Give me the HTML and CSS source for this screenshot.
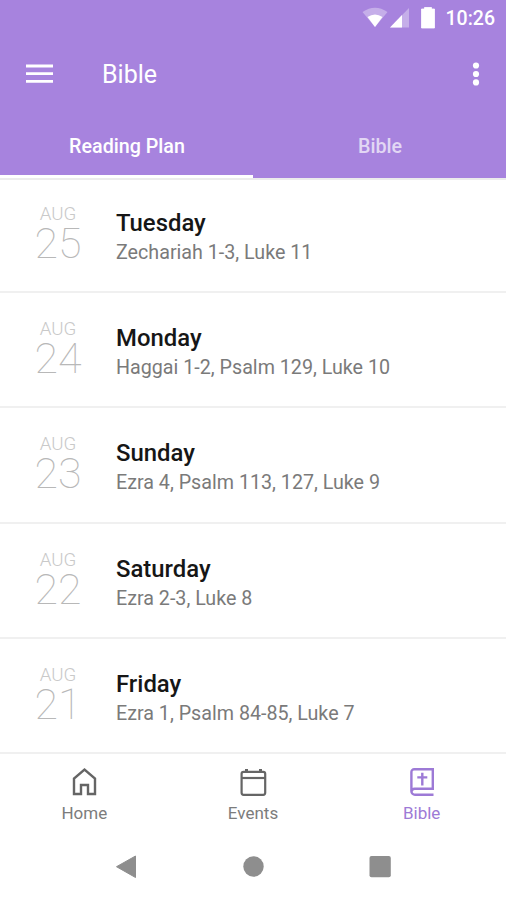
FILE: index.html
```html
<!DOCTYPE html>
<html lang="en">
<head>
<meta charset="utf-8">
<title>Bible</title>
<link rel="stylesheet" href="styles.css">
</head>
<body>
<div class="screen">
  <header class="header">
    <div class="status">
      <svg class="status-icons" width="76" height="24" viewBox="0 0 76 24">
        <path d="M1.500 12Q14 3.500 26.500 12L14 27Z" fill="#fff" opacity=".35"/>
        <path d="M6.500 17Q14 12 21.500 17L14 27Z" fill="#fff"/>
        <path d="M48 8V27.500H29Z" fill="#fff" opacity=".35"/>
        <path d="M41 15V27.500H29Z" fill="#fff"/>
        <path d="M60.500 9h3V7.500h7V9h3v19H60.500Z" fill="#fff" stroke="#fff" stroke-width=".8" stroke-linejoin="round"/>
      </svg>
      <span class="clock">10:26</span>
    </div>
    <div class="appbar">
      <svg width="27" height="20" viewBox="0 0 27 20"><path d="M0 2h27M0 9.7h27M0 17.4h27" stroke="#fff" stroke-width="2.8"/></svg>
      <h1 class="title">Bible</h1>
      <svg width="8" height="24" viewBox="0 0 8 24" fill="#fff"><circle cx="4" cy="3.5" r="3.1"/><circle cx="4" cy="12" r="3.1"/><circle cx="4" cy="20.4" r="3.1"/></svg>
    </div>
    <nav class="tabs">
      <div class="tab active"><span class="tab-a">Reading Plan</span></div>
      <div class="tab"><span class="tab-b">Bible</span></div>
    </nav>
  </header>
  <main class="list">
    <article class="row"><div class="date"><span class="month">AUG</span><span class="num">25</span></div><div class="info"><h2 class="day">Tuesday</h2><p class="text">Zechariah 1-3, Luke 11</p></div></article>
    <article class="row"><div class="date"><span class="month">AUG</span><span class="num">24</span></div><div class="info"><h2 class="day">Monday</h2><p class="text">Haggai 1-2, Psalm 129, Luke 10</p></div></article>
    <article class="row"><div class="date"><span class="month">AUG</span><span class="num">23</span></div><div class="info"><h2 class="day">Sunday</h2><p class="text">Ezra 4, Psalm 113, 127, Luke 9</p></div></article>
    <article class="row"><div class="date"><span class="month">AUG</span><span class="num">22</span></div><div class="info"><h2 class="day">Saturday</h2><p class="text">Ezra 2-3, Luke 8</p></div></article>
    <article class="row"><div class="date"><span class="month">AUG</span><span class="num">21</span></div><div class="info"><h2 class="day">Friday</h2><p class="text">Ezra 1, Psalm 84-85, Luke 7</p></div></article>
  </main>
  <nav class="bottom">
    <div class="item">
      <svg width="32" height="32" viewBox="0 0 32 32" fill="none" stroke="currentColor" stroke-width="2.4"><path d="M6 28V12.500L16.500 3.500l10.500 9V28H20V19h-7v9Z"/></svg>
      <span class="label">Home</span>
    </div>
    <div class="item">
      <svg width="32" height="32" viewBox="0 0 32 32" fill="none" stroke="currentColor" stroke-width="2.2"><rect x="4.6" y="5.8" width="23.6" height="23" rx="2"/><path d="M4.600 12h23.600"/><path d="M9.500 6V3M23.500 6V3" stroke-width="3"/></svg>
      <span class="label">Events</span>
    </div>
    <div class="item selected">
      <svg width="32" height="32" viewBox="0 0 32 32" fill="none" stroke="currentColor" stroke-width="2.4"><path d="M27.500 28.800H9a3.600 3.600 0 0 1-3.600-3.600V6a2.800 2.800 0 0 1 2.800-2.800H26.800V22.800H9a3.300 3.300 0 0 0-3.500 2.600M16.300 6.800V19.500M11.300 11.400h10"/></svg>
      <span class="label">Bible</span>
    </div>
  </nav>
  <footer class="system">
    <svg width="506" height="30" viewBox="0 0 506 30" fill="#8e8e8e"><path d="M116.500 15.700 135.500 5V26.500Z" stroke="#8e8e8e" stroke-linejoin="round"/><circle cx="253.500" cy="15.500" r="10.200"/><rect x="369.500" y="5" width="21.300" height="21.300" rx="2"/></svg>
  </footer>
</div>
</body>
</html>
```

FILE: styles.css
```css
* { box-sizing: border-box; margin: 0; padding: 0; }
body { font-family: Roboto, "Liberation Sans", sans-serif; background: #fff; }
svg { display: block; flex: none; }
.screen { width: 506px; height: 900px; overflow: hidden; display: flex; flex-direction: column; }
.header { height: 178px; background: #a783de; color: #fff; display: flex; flex-direction: column; flex: none; }
.status { height: 36px; display: flex; justify-content: flex-end; padding-right: 11px; }
.status-icons { margin-right: 9px; height: 24px; overflow: visible; }
.clock { font-size: 19.5px; font-weight: 500; line-height: 38px; white-space: nowrap; }
.appbar { height: 78px; display: flex; align-items: center; padding: 0 26px 2px; }
.appbar svg:last-child { margin-left: auto; }
.title { font-size: 25px; font-weight: 400; margin-left: 49px; padding-top: 1px; }
.tabs { height: 64px; display: flex; }
.tab { width: 253.5px; padding: 1px 0 0 1px; font-size: 19.7px; font-weight: 500; line-height: 64px; text-align: center; height: 64px; }
.tab.active { border-bottom: 3px solid #fff; }
.tab-b { opacity: .68; }
.list { flex: none; border-top: 2px solid #ececec; height: 575px; }
.row { height: 115.3px; border-bottom: 2px solid #f0f0f0; display: flex; }
.row:first-child { height: 113px; }
.row:first-child .date { padding-top: 24px; }
.row:first-child .info { padding-top: 27px; }
.date { width: 116px; padding-top: 26px; display: flex; flex-direction: column; align-items: center; color: #c9c9c9; }
.month { font-size: 18.7px; line-height: 20px; font-weight: 300; }
.num { font-size: 43px; line-height: 38px; font-weight: 100; color: #b8b8b8; }
.info { padding-top: 29px; }
.day { font-size: 23.9px; line-height: 32px; font-weight: 500; color: #161616; }
.text { font-size: 19.7px; line-height: 27px; color: #7a7a7a; }
.bottom { height: 77px; display: flex; color: #656565; }
.item { flex: 1; display: flex; flex-direction: column; align-items: center; padding-top: 13px; }
.label { font-size: 17px; line-height: 20px; margin-top: 5px; color: #7c7c7c; }
.selected, .selected .label { color: #9d7ad6; }
.system { padding-top: 21px; }
```
